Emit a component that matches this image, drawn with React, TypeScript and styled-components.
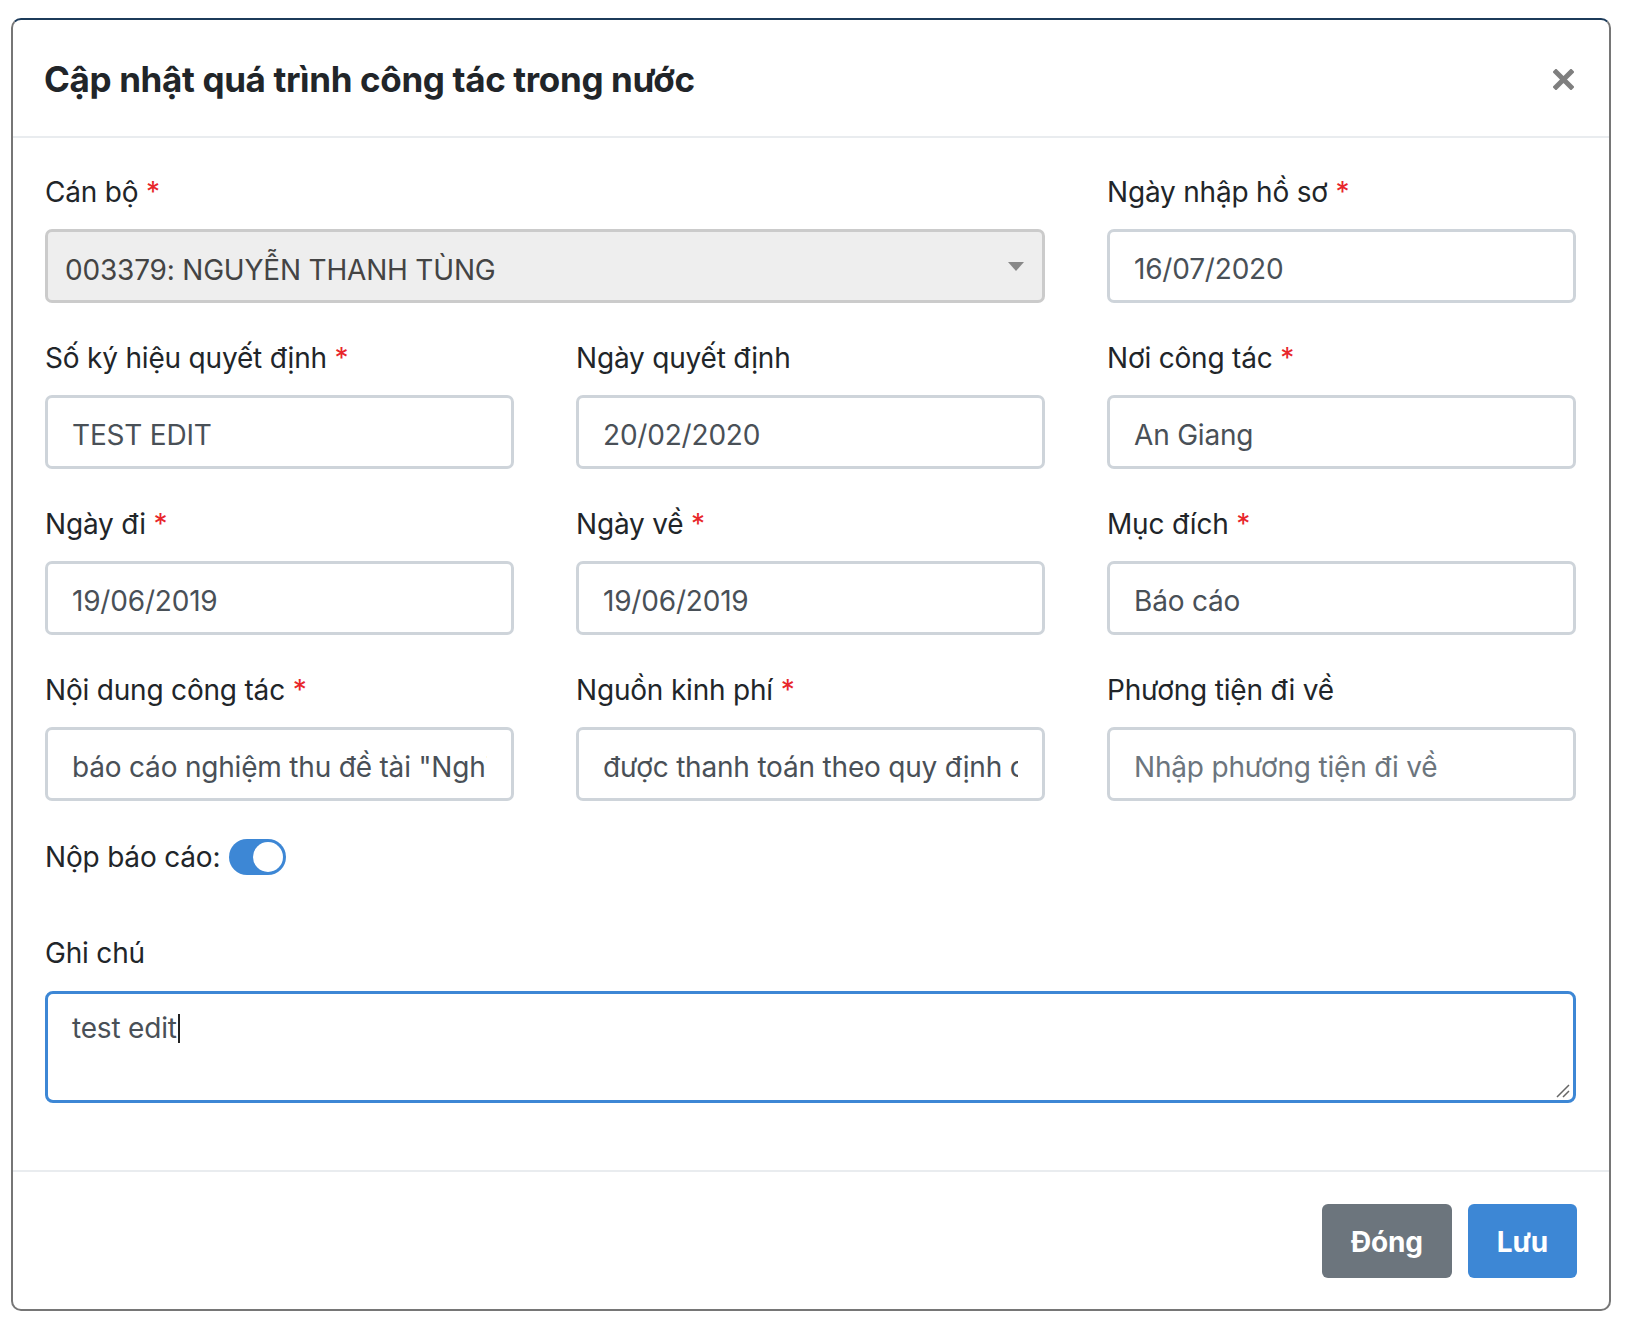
import styled, { createGlobalStyle } from 'styled-components';

const GlobalStyle = createGlobalStyle`
    * {
        box-sizing: border-box;
    }

    body {
        margin: 0;
        background: #fff;
        font-family: Inter, 'Liberation Sans', Arial, sans-serif;
        letter-spacing: -0.012em;
        color: #212529;
    }
`;

type FieldData = {
    label: string;
    required?: boolean;
    value?: string;
    placeholder?: string;
};

const rows: FieldData[][] = [
    [
        { label: 'Số ký hiệu quyết định', required: true, value: 'TEST EDIT' },
        { label: 'Ngày quyết định', value: '20/02/2020' },
        { label: 'Nơi công tác', required: true, value: 'An Giang' },
    ],
    [
        { label: 'Ngày đi', required: true, value: '19/06/2019' },
        { label: 'Ngày về', required: true, value: '19/06/2019' },
        { label: 'Mục đích', required: true, value: 'Báo cáo' },
    ],
    [
        {
            label: 'Nội dung công tác',
            required: true,
            value: 'báo cáo nghiệm thu đề tài "Nghiên cứu ứng dụng công nghệ"',
        },
        {
            label: 'Nguồn kinh phí',
            required: true,
            value: 'được thanh toán theo quy định của nhà nước',
        },
        { label: 'Phương tiện đi về', placeholder: 'Nhập phương tiện đi về' },
    ],
];

function FieldLabel({ label, required }: { label: string; required?: boolean }) {
    return (
        <Label>
            {label}
            {required && <Required> *</Required>}
        </Label>
    );
}

function App() {
    return (
        <>
            <GlobalStyle />
            <Backdrop>
                <Modal>
                    <Header>
                        <Title>Cập nhật quá trình công tác trong nước</Title>
                        <CloseButton aria-label='Close'>
                            <svg width='21' height='21' viewBox='0 0 21 21'>
                                <path
                                    d='M3 3 L18 18 M18 3 L3 18'
                                    stroke='#7f7f7f'
                                    strokeWidth='5'
                                    strokeLinecap='square'
                                />
                            </svg>
                        </CloseButton>
                    </Header>

                    <Body>
                        <FieldGrid>
                            <Field $wide>
                                <FieldLabel label='Cán bộ' required />
                                <SelectBox>
                                    <span>003379: NGUYỄN THANH TÙNG</span>
                                    <svg width='16' height='9' viewBox='0 0 16 9'>
                                        <path d='M0 0 H16 L8 9 Z' fill='#888' />
                                    </svg>
                                </SelectBox>
                            </Field>
                            <Field>
                                <FieldLabel label='Ngày nhập hồ sơ' required />
                                <TextInput readOnly value='16/07/2020' />
                            </Field>

                            {rows.flat().map((f) => (
                                <Field key={f.label}>
                                    <FieldLabel label={f.label} required={f.required} />
                                    <TextInput
                                        readOnly
                                        value={f.value ?? ''}
                                        placeholder={f.placeholder}
                                    />
                                </Field>
                            ))}
                        </FieldGrid>

                        <SwitchRow>
                            <span>Nộp báo cáo:</span>
                            <Switch $on />
                        </SwitchRow>

                        <NoteGroup>
                            <Label>Ghi chú</Label>
                            <NoteBox>
                                test edit
                                <Caret />
                                <Grip width='14' height='14' viewBox='0 0 14 14'>
                                    <path d='M1 13 L13 1 M7 13 L13 7' stroke='#666' strokeWidth='1.5' />
                                </Grip>
                            </NoteBox>
                        </NoteGroup>
                    </Body>

                    <Footer>
                        <Button $variant='secondary'>Đóng</Button>
                        <Button $variant='primary'>Lưu</Button>
                    </Footer>
                </Modal>
            </Backdrop>
        </>
    );
}

const Backdrop = styled.div`
    padding: 18px 0 14px 11px;
`;

const Modal = styled.div`
    width: 1600px;
    background: #fff;
    border: 2px solid #767676;
    border-top-color: #1c3b5a;
    border-radius: 10px;
`;

const Header = styled.div`
    display: flex;
    align-items: center;
    justify-content: space-between;
    padding: 38px 35px 36px 31px;
    border-bottom: 2px solid #e9ecef;
`;

const Title = styled.h5`
    margin: 0;
    font-size: 35px;
    line-height: 42px;
    font-weight: 700;
    letter-spacing: -0.01em;
    color: #212529;
`;

const CloseButton = styled.button`
    display: flex;
    padding: 0;
    border: 0;
    background: none;
    cursor: pointer;
`;

const Body = styled.div`
    padding: 33px 33px 67px 32px;
`;

const FieldGrid = styled.div`
    display: grid;
    grid-template-columns: repeat(3, 1fr);
    column-gap: 62px;
    row-gap: 34px;
`;

const Field = styled.div<{ $wide?: boolean }>`
    display: flex;
    flex-direction: column;
    min-width: 0;
    grid-column: ${(p) => (p.$wide ? 'span 2' : 'auto')};
`;

const Label = styled.label`
    display: block;
    font-size: 28px;
    line-height: 42px;
    margin-bottom: 16px;
    color: #212529;
`;

const Required = styled.span`
    color: #e8262b;
`;

const TextInput = styled.input`
    width: 100%;
    height: 74px;
    padding: 5px 24px 0;
    border: 3px solid #ced4da;
    border-radius: 7px;
    font-family: inherit;
    font-size: 28px;
    letter-spacing: inherit;
    color: #495057;
    background: #fff;
    outline: none;

    &::placeholder {
        color: #6c757d;
    }
`;

const SelectBox = styled.div`
    display: flex;
    align-items: center;
    justify-content: space-between;
    height: 74px;
    padding: 0 18px 0 17px;
    border: 3px solid #cbcbcb;
    border-radius: 7px;
    background: #eee;
    font-size: 28px;
    color: #444;

    span {
        padding-top: 8px;
    }
`;

const SwitchRow = styled.div`
    display: flex;
    align-items: center;
    gap: 9px;
    margin-top: 35px;
    font-size: 28px;
    line-height: 42px;
`;

const Switch = styled.span<{ $on?: boolean }>`
    position: relative;
    width: 57px;
    height: 36px;
    border-radius: 18px;
    background: ${(p) => (p.$on ? '#3d87d5' : '#ced4da')};

    &::after {
        content: '';
        position: absolute;
        top: 3px;
        left: ${(p) => (p.$on ? '24px' : '3px')};
        width: 30px;
        height: 30px;
        border-radius: 50%;
        background: #fff;
    }
`;

const NoteGroup = styled.div`
    margin-top: 54px;

    ${Label} {
        margin-bottom: 17px;
    }
`;

const NoteBox = styled.div`
    position: relative;
    height: 112px;
    padding: 13px 24px;
    border: 3px solid #3d87d5;
    border-radius: 8px;
    font-size: 28px;
    line-height: 42px;
    color: #495057;
`;

const Caret = styled.span`
    display: inline-block;
    width: 2px;
    height: 29px;
    margin-left: 1px;
    vertical-align: -5px;
    background: #222;
`;

const Grip = styled.svg`
    position: absolute;
    right: 3px;
    bottom: 2px;
`;

const Footer = styled.div`
    display: flex;
    justify-content: flex-end;
    gap: 16px;
    padding: 32px 32px 31px;
    border-top: 2px solid #e9ecef;
`;

const Button = styled.button<{ $variant: 'primary' | 'secondary' }>`
    height: 74px;
    padding: 2px 29px 0;
    border: 0;
    border-radius: 6px;
    font-family: inherit;
    font-size: 28px;
    font-weight: 700;
    letter-spacing: inherit;
    color: #fff;
    background: ${(p) => (p.$variant === 'primary' ? '#3d87d5' : '#6c757d')};
    cursor: pointer;
`;

export default App;
